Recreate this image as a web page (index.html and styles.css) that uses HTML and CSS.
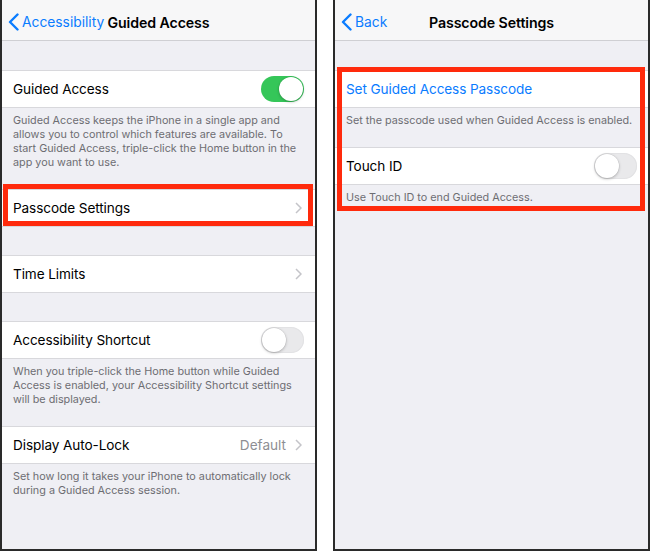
FILE: index.html
```html
<!DOCTYPE html>
<html>
<head>
<meta charset="utf-8">
<link rel="stylesheet" href="styles.css">
</head>
<body>
<div class="panel">
  <div class="nav">
    <div class="back">
      <svg class="back-chev" width="11" height="18" viewBox="0 0 11 18"><path d="M9.5 1.5 L2 9 L9.5 16.5" fill="none" stroke="#0a7cff" stroke-width="2.4" stroke-linecap="round" stroke-linejoin="round"/></svg>
      <span>Accessibility</span>
    </div>
    <div class="title">Guided Access</div>
    <div></div>
  </div>
  <div class="content">
    <div class="group first">
      <div class="row"><span class="label">Guided Access</span><span class="toggle on"><span class="knob"></span></span></div>
    </div>
    <div class="footer">Guided Access keeps the iPhone in a single app and allows you to control which features are available. To start Guided Access, triple-click the Home button in the app you want to use.</div>
    <div class="group highlight hl-left">
      <div class="row"><span class="label">Passcode Settings</span><svg class="chev" width="7" height="12" viewBox="0 0 7 12"><path d="M1 1 L6 6 L1 11" fill="none" stroke="#c4c4c9" stroke-width="1.5"/></svg></div>
    </div>
    <div class="group">
      <div class="row"><span class="label">Time Limits</span><svg class="chev" width="7" height="12" viewBox="0 0 7 12"><path d="M1 1 L6 6 L1 11" fill="none" stroke="#c4c4c9" stroke-width="1.5"/></svg></div>
    </div>
    <div class="group">
      <div class="row"><span class="label">Accessibility Shortcut</span><span class="toggle"><span class="knob"></span></span></div>
    </div>
    <div class="footer">When you triple-click the Home button while Guided Access is enabled, your Accessibility Shortcut settings will be displayed.</div>
    <div class="group">
      <div class="row"><span class="label">Display Auto-Lock</span><span class="detail">Default<svg class="chev" width="7" height="12" viewBox="0 0 7 12"><path d="M1 1 L6 6 L1 11" fill="none" stroke="#c4c4c9" stroke-width="1.5"/></svg></span></div>
    </div>
    <div class="footer">Set how long it takes your iPhone to automatically lock during a Guided Access session.</div>
  </div>
</div>
<div class="panel">
  <div class="nav">
    <div class="back">
      <svg class="back-chev" width="11" height="18" viewBox="0 0 11 18"><path d="M9.5 1.5 L2 9 L9.5 16.5" fill="none" stroke="#0a7cff" stroke-width="2.4" stroke-linecap="round" stroke-linejoin="round"/></svg>
      <span>Back</span>
    </div>
    <div class="title">Passcode Settings</div>
    <div></div>
  </div>
  <div class="content">
    <div class="highlight hl-right">
      <div class="group first">
        <div class="row"><span class="label link">Set Guided Access Passcode</span></div>
      </div>
      <div class="footer">Set the passcode used when Guided Access is enabled.</div>
      <div class="group">
        <div class="row"><span class="label">Touch ID</span><span class="toggle"><span class="knob"></span></span></div>
      </div>
      <div class="footer">Use Touch ID to end Guided Access.</div>
    </div>
  </div>
</div>
</body>
</html>
```
FILE: styles.css
```css
* { box-sizing: border-box; }
html, body { margin: 0; padding: 0; background: #fff; }
body {
  display: flex;
  gap: 16px;
  width: 650px;
  height: 551px;
  font-family: Inter, "Liberation Sans", sans-serif;
  -webkit-font-smoothing: antialiased;
}
.panel {
  width: 317px;
  height: 551px;
  border: 2px solid #2a2a2a;
  border-top: none;
  background: #efeff4;
  display: flex;
  flex-direction: column;
  overflow: hidden;
}
.nav {
  height: 41px;
  flex: none;
  background: #f7f7f8;
  border-bottom: 1px solid #cfcfd3;
  display: grid;
  grid-template-columns: minmax(0, 1fr) auto minmax(0, 1fr);
  align-items: center;
  padding-top: 4px;
}
.back {
  display: flex;
  align-items: center;
  color: #0a7cff;
  font-size: 13.8px;
  padding-left: 6px;
  gap: 3px;
  white-space: nowrap;
}
.back-chev { flex: none; }
.title {
  font-weight: 600;
  font-size: 14.2px;
  color: #000;
  letter-spacing: -0.1px;
}
.content {
  display: flex;
  flex-direction: column;
}
.group {
  margin-top: 28px;
  background: #fff;
  border-top: 1px solid #d8d8dc;
  border-bottom: 1px solid #d8d8dc;
}
.group.first { margin-top: 29px; }
.footer + .group { margin-top: 0; }
.row {
  height: 36px;
  display: flex;
  align-items: center;
  justify-content: space-between;
  padding: 0 11px 0 11px;
}
.label {
  font-size: 13.6px;
  color: #000;
  letter-spacing: -0.1px;
}
.label.link { color: #0a7cff; }
.footer {
  padding: 6px 14px 19px 11px;
  font-size: 10.8px;
  line-height: 14px;
  color: #6d6d72;
}
.chev { margin-right: 2px; }
.detail {
  display: flex;
  align-items: center;
  gap: 9px;
  font-size: 13.6px;
  color: #8e8e93;
}
.toggle {
  position: relative;
  width: 43px;
  height: 26px;
  border-radius: 13px;
  background: #e9e9eb;
  box-shadow: inset 0 0 0 1px #e2e2e4;
  flex: none;
}
.toggle .knob {
  position: absolute;
  top: 1px;
  left: 1px;
  width: 24px;
  height: 24px;
  border-radius: 50%;
  background: #fff;
  box-shadow: 0 1px 3px rgba(0,0,0,0.25), 0 0 0 0.5px rgba(0,0,0,0.08);
}
.toggle.on { background: #35c659; box-shadow: none; }
.toggle.on .knob { left: 18px; }
.highlight { position: relative; }
.highlight::after {
  content: "";
  position: absolute;
  border: 5px solid #ff2a0c;
  pointer-events: none;
}
.hl-left::after { top: -6px; bottom: 0; left: 1px; right: 2px; }
.hl-right::after { top: 26px; bottom: 13px; left: 2px; right: 3px; }
```
